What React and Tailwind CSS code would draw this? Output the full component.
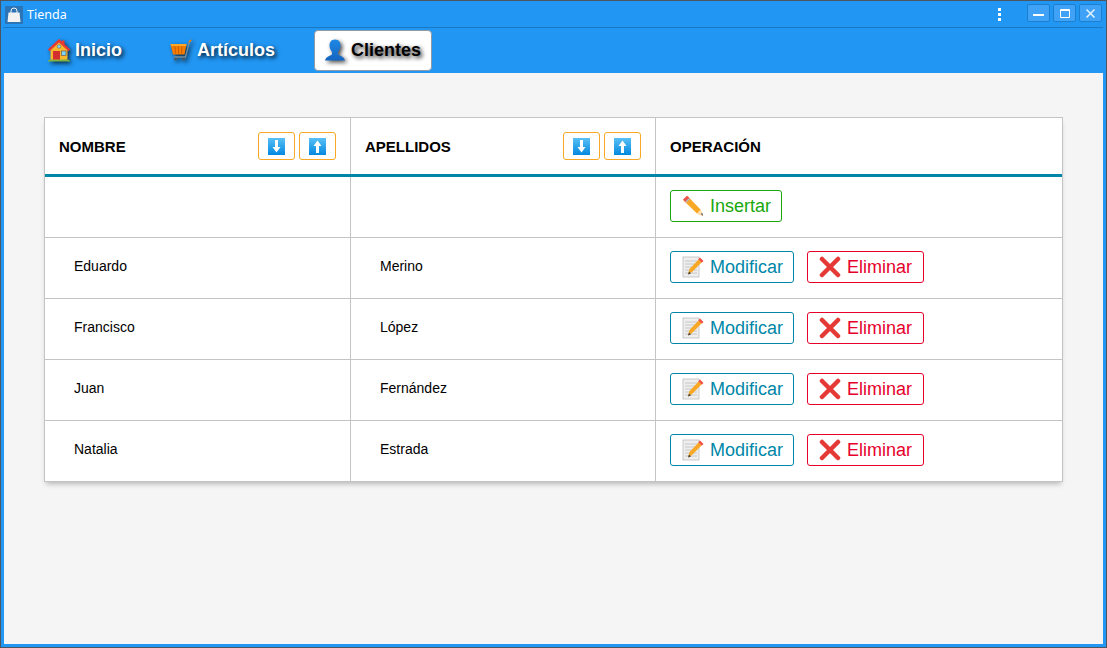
const shadow = "shrink-0 drop-shadow-[2px_2px_2px_rgba(0,0,0,0.7)]";
const House = () => (
  <svg width="24" height="24" viewBox="0 0 24 24" className={shadow}>
    <path d="M1 23.500c0-2 2-2.500 11-2.500s11 .5 11 2.500z" fill="#7cb342" />
    <rect x="3.500" y="10" width="17" height="11.500" fill="#fbb82d" />
    <path d="M12 3 4 11h16z" fill="#fbb82d" />
    <path d="M12 1 .8 11.500l1.700 1.700L12 4.500l9.500 8.700 1.700-1.700L17.500 6V2.500h-2.500v1z" fill="#e53935" />
    <rect x="6" y="13" width="7" height="8.500" fill="#d32f2f" />
    <rect x="14.500" y="13" width="4.500" height="4.500" fill="#81d4fa" stroke="#6d5a4d" strokeWidth="0.7" />
    <circle cx="12" cy="8.500" r="1.800" fill="#81d4fa" stroke="#6d5a4d" strokeWidth="0.5" />
  </svg>
);
const Cart = () => (
  <svg width="24" height="24" viewBox="0 0 24 24" className={shadow}>
    <path d="M1.500 6h16l-2 10.500H4z" fill="#f57c00" />
    <path d="M1.500 6h16l-.4 2H2z" fill="#ffa726" />
    <path d="M6 8.500 6.600 15.500M9.500 8.500V15.500M13 8.500 12.500 15.500" stroke="#c75f00" strokeWidth="1" />
    <path d="M20.500 3.500 16.500 19H5" fill="none" stroke="#78909c" strokeWidth="1.300" />
    <path d="M23 1.500 20 2.500l-.5 2 2-.5z" fill="#f57c00" />
    <circle cx="6.500" cy="21" r="1.600" fill="#455a64" />
    <circle cx="14.500" cy="21" r="1.600" fill="#455a64" />
  </svg>
);
const Person = () => (
  <svg width="24" height="24" viewBox="0 0 24 24" className={shadow}>
    <defs>
      <linearGradient id="pg" x1="0" y1="0" x2="0" y2="1">
        <stop offset="0" stopColor="#1e88e5" />
        <stop offset="1" stopColor="#1565c0" />
      </linearGradient>
    </defs>
    <path d="M12 1.500c-4 0-5.500 3-5.500 6 0 3 1.500 5 2.500 6.500v2.500c-2 1.500-6 2-7 6h20c-1-4-5-4.500-7-6V14c1-1.500 2.500-3.500 2.500-6.500 0-3-1.500-6-5.500-6z" fill="url(#pg)" />
  </svg>
);
const ArrowBox = ({ up }) => (
  <svg width="17" height="17" viewBox="0 0 17 17" className="shrink-0">
    <defs>
      <linearGradient id="ab" x1="0" y1="0" x2="0" y2="1">
        <stop offset="0" stopColor="#5ac0f5" />
        <stop offset="1" stopColor="#0288e0" />
      </linearGradient>
    </defs>
    <rect width="17" height="17" fill="url(#ab)" />
    {up ? (
      <path d="M8.500 2.500 12.500 8H10V15H7V8H4.500z" fill="#fff" />
    ) : (
      <path d="M8.500 14.500 12.500 9H10V2H7V9H4.500z" fill="#fff" />
    )}
  </svg>
);
const Pencil = () => (
  <svg width="22" height="22" viewBox="0 0 22 22" className="shrink-0">
    <path d="M5.500 1 1 5 15 18.500 21 21 18.500 14.500z" fill="#f9a825" />
    <path d="M5 .8 1 4.600 4 7.500 8 3.500z" fill="#ef5350" />
    <path d="M3.500 6.500 7 3 8 4 4.500 7.500z" fill="#b0bec5" />
    <path d="M15 18.500 21 21 18.500 14.500z" fill="#ffe0b2" />
    <path d="M19 19 21 21 20.200 17.800z" fill="#424242" />
  </svg>
);
const Memo = () => (
  <svg width="22" height="22" viewBox="0 0 22 22" className="shrink-0">
    <rect x="1" y="1" width="16" height="20" fill="#eeeeee" stroke="#bdbdbd" strokeWidth="0.8" />
    <path d="M3 5h12M3 8h12M3 11h12M3 14h12M3 17h12" stroke="#bdbdbd" strokeWidth="0.8" />
    <path d="M18 2 21 5 10 16 6 18.500 7.500 13z" fill="#f9a825" />
    <path d="M18 1.500 21.500 5 19.800 6.700 16.300 3.200z" fill="#ef5350" />
    <path d="M6 18.500 7 15.500 9 17.500z" fill="#424242" />
  </svg>
);
const Cross = () => (
  <svg width="22" height="22" viewBox="0 0 22 22" className="shrink-0">
    <path d="M3 3 19 19M19 3 3 19" stroke="#e53935" strokeWidth="4.500" strokeLinecap="round" />
  </svg>
);
const Sort = ({ up }) => (
  <button className="flex h-[28px] w-[37px] items-center justify-center rounded-[3px] border border-[#f9a825] bg-white">
    <ArrowBox up={up} />
  </button>
);
const Action = ({ icon, label, cls }) => (
  <button className={`flex h-[32px] items-center gap-[6px] rounded-[3px] border bg-white pl-[11px] text-[18px] ${cls}`}>
    {icon}
    <span>{label}</span>
  </button>
);
const Header = ({ label, sort }) => (
  <div className="flex h-[56px] min-w-0 items-center justify-between px-[14px] text-[15px] font-bold text-black">
    <span className="pt-[2px]">{label}</span>
    {sort && (
      <div className="flex gap-[4px]">
        <Sort />
        <Sort up />
      </div>
    )}
  </div>
);
const rows = [
  ["Eduardo", "Merino"],
  ["Francisco", "López"],
  ["Juan", "Fernández"],
  ["Natalia", "Estrada"],
];
const cell = "flex items-center border-r border-[#c4c4c4] pl-[29px] pb-[4px] text-[14px] text-black";
const col = "grid-cols-[306px_305px_1fr]";
const Tab = ({ icon, label, active, cls }) => (
  <div
    className={`flex items-center text-[18px] font-bold ${cls} ${
      active
        ? "h-[41px] gap-[3px] rounded-[4px] border border-[#8f9aa5] bg-white pl-[8px] text-black [text-shadow:2px_2px_4px_rgba(0,0,0,0.9)]"
        : "h-[42px] gap-[4px] text-white [text-shadow:2px_2px_4px_rgba(0,0,0,0.9)]"
    }`}
  >
    {icon}
    <span className={active ? "ml-[1px]" : ""}>{label}</span>
  </div>
);
const winBtn = "flex h-[18px] w-[23px] items-center justify-center rounded-[2px] border border-[#1b7fd0] bg-[#3fa2f6]";
export default function App() {
  return (
    <div className="flex h-[648px] w-[1107px] flex-col overflow-hidden border border-[#4d5560] bg-[#2196f3] font-['Liberation_Sans',sans-serif]">
      <div className="ml-[2px] mr-[3px] flex h-[27px] shrink-0 items-center border-b border-[#1a78c2] pl-[2px] pr-[1px] pt-[1px]">
        <div className="flex h-[18px] w-[18px] items-center justify-center bg-[#2b74b5]">
          <svg width="16" height="16" viewBox="0 0 16 16">
            <path d="M2.500 5.500h11l1 9.500H1.500z" fill="#f2f2f2" />
            <path d="M5 8V4a3 3 0 0 1 6 0V8" fill="none" stroke="#f2f2f2" strokeWidth="1" />
          </svg>
        </div>
        <span className="ml-[4px] mt-[1px] font-['Noto_Sans',sans-serif] text-[12.500px] text-white">Tienda</span>
        <div className="ml-auto mr-[26px] flex flex-col gap-[2px]">
          <span className="h-[3px] w-[3px] bg-white" />
          <span className="h-[3px] w-[3px] bg-white" />
          <span className="h-[3px] w-[3px] bg-white" />
        </div>
        <div className="flex gap-[3px] pb-[3px]">
          <div className={winBtn}>
            <span className="mt-[3px] h-[2px] w-[11px] bg-white" />
          </div>
          <div className={winBtn}>
            <span className="h-[9px] w-[10px] rounded-[1px] border border-t-2 border-white" />
          </div>
          <div className={winBtn}>
            <svg width="11" height="11" viewBox="0 0 11 11">
              <path d="M1.500 1.500l8 8M9.500 1.500l-8 8" stroke="#e8f4fe" strokeWidth="1.500" />
            </svg>
          </div>
        </div>
      </div>
      <div className="flex h-[45px] shrink-0 items-center pb-[1px] pl-[46px]">
        <Tab icon={<House />} label="Inicio" cls="" />
        <Tab icon={<Cart />} label="Artículos" cls="ml-[47px]" />
        <Tab icon={<Person />} label="Clientes" active cls="ml-[39px] w-[118px]" />
      </div>
      <div className="mx-[3px] mb-[3px] flex-1 bg-[#f5f5f5] px-[40px] pt-[44px]">
        <div className="border border-[#c4c4c4] bg-white shadow-[0_4px_5px_-2px_rgba(0,0,0,0.25)]">
          <div className={`grid h-[59px] ${col} border-b-[3px] border-[#0087a8]`}>
            <div className="border-r border-[#c4c4c4]"><Header label="NOMBRE" sort /></div>
            <div className="border-r border-[#c4c4c4]"><Header label="APELLIDOS" sort /></div>
            <Header label="OPERACIÓN" />
          </div>
          <div className={`grid h-[61px] ${col} border-b border-[#c4c4c4]`}>
            <div className="border-r border-[#c4c4c4]" />
            <div className="border-r border-[#c4c4c4]" />
            <div className="flex items-center pb-[2px] pl-[14px]">
              <Action icon={<Pencil />} label="Insertar" cls="border-[#19a80d] pr-[10px] text-[#19a80d]" />
            </div>
          </div>
          {rows.map(([a, b], i) => (
            <div key={a} className={`grid ${col} ${i < rows.length - 1 ? "h-[61px] border-b border-[#c4c4c4]" : "h-[60px]"}`}>
              <div className={cell}>{a}</div>
              <div className={cell}>{b}</div>
              <div className="flex items-center gap-[13px] pb-[2px] pl-[14px]">
                <Action icon={<Memo />} label="Modificar" cls="border-[#0087a8] pr-[10px] text-[#0087a8]" />
                <Action icon={<Cross />} label="Eliminar" cls="border-[#e6002b] pr-[11px] text-[#e6002b]" />
              </div>
            </div>
          ))}
        </div>
      </div>
    </div>
  );
}
